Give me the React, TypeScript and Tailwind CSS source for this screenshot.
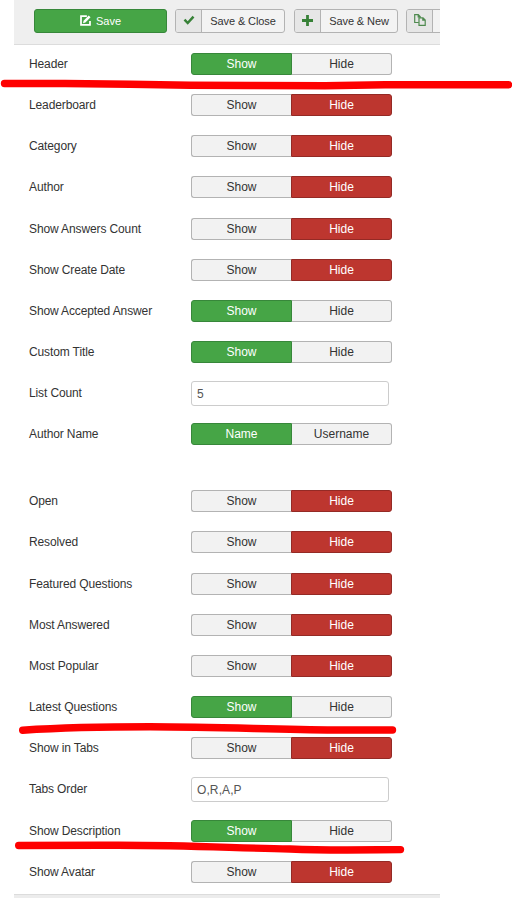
import React from "react";

type Field = { label: string; kind?: "toggle" | "text"; on?: boolean; options?: [string, string]; value?: string };

const general: Field[] = [
  { label: "Header", on: true },
  { label: "Leaderboard" },
  { label: "Category" },
  { label: "Author" },
  { label: "Show Answers Count" },
  { label: "Show Create Date" },
  { label: "Show Accepted Answer", on: true },
  { label: "Custom Title", on: true },
  { label: "List Count", kind: "text", value: "5" },
  { label: "Author Name", on: true, options: ["Name", "Username"] },
];

const tabs: Field[] = [
  { label: "Open" },
  { label: "Resolved" },
  { label: "Featured Questions" },
  { label: "Most Answered" },
  { label: "Most Popular" },
  { label: "Latest Questions", on: true },
  { label: "Show in Tabs" },
  { label: "Tabs Order", kind: "text", value: "O,R,A,P" },
  { label: "Show Description", on: true },
  { label: "Show Avatar" },
];

function Toggle({ on, options = ["Show", "Hide"] }: { on?: boolean; options?: [string, string] }) {
  const base = "flex h-full items-center justify-center border";
  return (
    <div className="flex h-[22px] w-[201px] text-[12px] leading-none">
      <button
        className={`${base} rounded-l-[3px] ${
          on
            ? "w-[101px] border-[#37873a] bg-[#46a546] text-white"
            : "w-[100px] border-r-0 border-[#b3b3b3] bg-[#f2f2f2] text-[#333]"
        }`}
      >
        {options[0]}
      </button>
      <button
        className={`${base} rounded-r-[3px] ${
          on
            ? "w-[100px] border-l-0 border-[#b3b3b3] bg-[#f2f2f2] text-[#333]"
            : "w-[101px] border-[#942a25] bg-[#bd362f] text-white"
        }`}
      >
        {options[1]}
      </button>
    </div>
  );
}

function Row({ field }: { field: Field }) {
  return (
    <div className="flex h-[41.2px] items-center">
      <span className="w-[162px] shrink-0 whitespace-nowrap text-[12px] leading-[18px] tracking-[-0.12px] text-[#333]">
        {field.label}
      </span>
      {field.kind === "text" ? (
        <input
          className="h-[25px] w-[198px] rounded-[3px] border border-[#ccc] bg-white px-[5px] pt-[2px] text-[12px] tracking-[0.1px] text-[#555] outline-none"
          defaultValue={field.value}
        />
      ) : (
        <Toggle on={field.on} options={field.options} />
      )}
    </div>
  );
}

function ToolButton({ icon, children, className = "" }: { icon: React.ReactNode; children?: React.ReactNode; className?: string }) {
  return (
    <button
      className={`flex h-6 shrink-0 overflow-hidden rounded-[3px] border border-[#b3b3b3] bg-[#f3f3f3] text-[11px] tracking-[-0.1px] text-[#333] ${className}`}
    >
      <span className="flex h-full w-[26px] shrink-0 items-center justify-center border-r border-[#b3b3b3] bg-[#e6e6e6]">{icon}</span>
      <span className="flex h-full flex-1 items-center justify-center whitespace-nowrap">{children}</span>
    </button>
  );
}

export default function App() {
  return (
    <div className="relative h-[898px] w-[512px] overflow-hidden bg-white font-['Liberation_Sans',Arial,sans-serif]">
      <div className="ml-[14px] w-[426px]">
        <header className="flex h-[45px] overflow-hidden border-b border-[#dcdcdc] bg-[#efefef] pl-5 pt-[9px]">
          <button className="flex h-6 w-[133px] shrink-0 items-center justify-center gap-[5px] rounded-[3px] border border-[#37873a] bg-[#46a546] text-[11px] leading-none text-white">
            <svg className="-mt-px" width="11" height="11" viewBox="0 0 12 12" fill="none">
              <path d="M7.5 1.1H1.1v9.8h9.8V6.5" stroke="white" strokeWidth="1.9" />
              <path d="M3.3 8.9l.6-2.6L9.5.5l2 2L5.9 8.3z" fill="white" />
            </svg>
            <span className="pt-px">Save</span>
          </button>
          <ToolButton
            className="ml-2 w-[110px]"
            icon={
              <svg className="-mt-[2px]" width="12" height="10" viewBox="0 0 11 10">
                <path d="M1 4.7 4.2 8 10 1.6" stroke="#378137" strokeWidth="2.5" fill="none" />
              </svg>
            }
          >
            Save &amp; Close
          </ToolButton>
          <ToolButton
            className="ml-[9px] w-[104px]"
            icon={
              <svg className="-mt-[2px]" width="11" height="11" viewBox="0 0 11 11">
                <path d="M5.5 0v11M0 5.5h11" stroke="#378137" strokeWidth="2.8" />
              </svg>
            }
          >
            Save &amp; New
          </ToolButton>
          <ToolButton
            className="ml-2 w-[110px]"
            icon={
              <svg className="-mt-[2px]" width="12" height="12" viewBox="0 0 12 12" fill="none" stroke="#4f8a4f" strokeWidth="1.2">
                <path d="M4.8 8.5H.7V.7h3.6l2 2v1.1M4.2.7v2.2h2.1" />
                <path d="M5 3.8h4l2.2 2.2v5.3H5zM8.8 3.8v2.4h2.4" />
              </svg>
            }
          />
        </header>
        <main className="-mt-[1.8px] pl-[15px]">
          <section>{general.map((f) => <Row key={f.label} field={f} />)}</section>
          <section className="mt-[25.5px]">{tabs.map((f) => <Row key={f.label} field={f} />)}</section>
        </main>
        <footer className="mt-[1.2px] h-3 border-t border-[#dcdcdc] bg-[#ececec]" />
      </div>
      <svg
        className="pointer-events-none absolute inset-0"
        width="512"
        height="898"
        viewBox="0 0 512 898"
        fill="none"
        stroke="#fe0000"
        strokeWidth="7.4"
        strokeLinecap="round"
        strokeLinejoin="round"
      >
        <path d="M4.5 83.5H65L130 84.3 190 85.2 250 85.5 325 85.8 385 84.7H508.5" />
        <path d="M22.7 730.2C65 727.5 110 726.8 150 726.8C220 727 270 729.4 335 730H392.5" />
        <path d="M18.7 845.5 100 845.3C180 844.5 230 848 290 849C330 850.7 365 849.8 400.5 849.6" />
      </svg>
    </div>
  );
}
